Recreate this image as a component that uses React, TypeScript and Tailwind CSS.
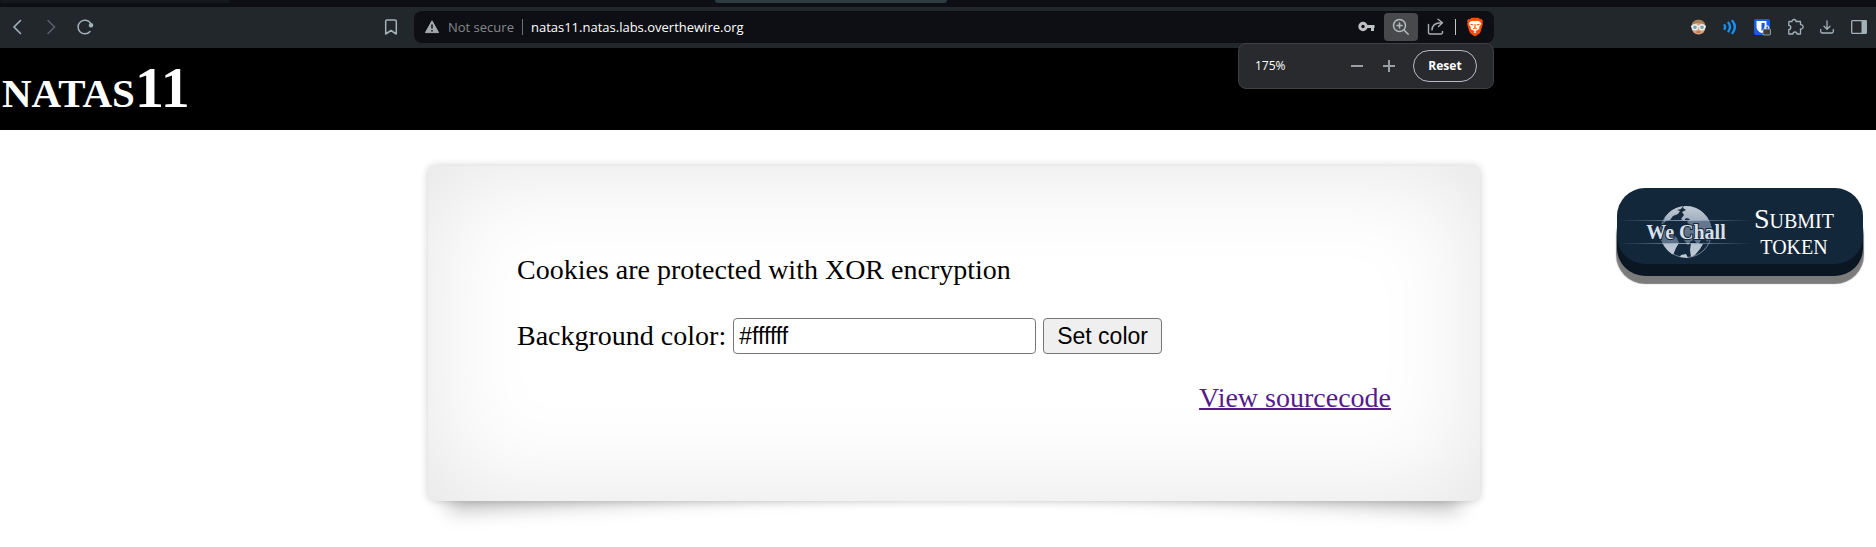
import React, { useState } from "react";

const ink = "#a3b2b8";

function Toolbar() {
  return (
    <header className="bg-[#22272b] font-['Open_Sans','Noto_Sans',sans-serif]">
      <div className="flex h-[7px] items-start justify-between bg-[#0e0f14]">
        <div className="h-[3px] w-[230px] rounded-b-md bg-[#15181c]" />
        <div className="mr-[929px] h-[3px] w-[232px] rounded-b-md bg-[#2f3b40]" />
      </div>
      <div className="flex h-[41px] items-center px-2 pb-px">
        <div className="flex min-w-0 flex-1 items-center justify-between pr-4">
          <nav className="flex flex-none items-center">
            <button aria-label="Back" className="flex w-[34px] justify-start pl-1">
              <svg width="10" height="16" viewBox="0 0 10 16" fill="none" stroke={ink} strokeWidth="1.6" strokeLinecap="round">
                <path d="M8.500 1.500 2 8l6.500 6.500" />
              </svg>
            </button>
            <button aria-label="Forward" className="flex w-[34px] justify-start pl-1">
              <svg width="10" height="16" viewBox="0 0 10 16" fill="none" stroke="#566066" strokeWidth="1.6" strokeLinecap="round">
                <path d="M2 1.500 8.500 8 2 14.500" />
              </svg>
            </button>
            <button aria-label="Reload" className="flex">
              <svg width="18" height="18" viewBox="0 0 18 18" fill="none" stroke={ink} strokeWidth="1.500" strokeLinecap="round">
                <path d="M14.500 5.200A6.800 6.800 0 1 0 14 13.500" />
                <circle cx="15" cy="7.300" r="1.500" fill={ink} />
              </svg>
            </button>
          </nav>
          <button aria-label="Bookmark this page" className="flex">
            <svg width="14" height="18" viewBox="0 0 14 18" fill="none" stroke={ink} strokeWidth="1.500" strokeLinejoin="round">
              <path d="M3 2h8a1.300 1.300 0 0 1 1.300 1.300V16L7 12.500 1.700 16V3.300A1.300 1.300 0 0 1 3 2Z" />
            </svg>
          </button>
        </div>
        <div className="relative flex h-8 w-[1080px] items-center rounded-lg bg-[#0e0f14] pr-[10px] pl-[11px]">
          <svg width="14" height="14" viewBox="0 0 14 14">
            <path d="M7 .8 13.600 12.600H.4Z" fill="#a5a8ab" stroke="#a5a8ab" strokeLinejoin="round" />
            <path d="M7 4.500v4M7 10v1.400" stroke="#0e0f14" strokeWidth="1.500" />
          </svg>
          <span className="ml-[9px] text-[13px] text-[#84898d]">Not secure</span>
          <span className="mx-2 h-4 w-px bg-[#6b7075]" />
          <input
            aria-label="Address"
            defaultValue="natas11.natas.labs.overthewire.org"
            className="min-w-0 flex-1 bg-transparent text-[13px] text-white outline-none"
          />
          <button aria-label="Passwords" className="flex">
            <svg width="18" height="12" viewBox="0 0 18 12" fill="none" stroke="#c0c0c2">
              <circle cx="5" cy="5.500" r="3.200" strokeWidth="3" />
              <path d="M8 5.500h8.500M14.500 6v4" strokeWidth="3" />
            </svg>
          </button>
          <button aria-label="Zoom" className="ml-2 flex h-7 w-[34px] items-center justify-center rounded bg-[#48494c]">
            <svg width="18" height="18" viewBox="0 0 18 18" fill="none" stroke="#b5babd" strokeWidth="1.500" strokeLinecap="round">
              <circle cx="7.500" cy="7.500" r="6" />
              <path d="m12 12 4.200 4.200M7.500 5v5M5 7.500h5" />
            </svg>
          </button>
          <button aria-label="Share" className="ml-[9px] flex">
            <svg width="18" height="18" viewBox="0 0 18 18" fill="none" stroke="#a9aeb1" strokeWidth="1.400" strokeLinecap="round" strokeLinejoin="round">
              <path d="M1.500 6.500v8a1.500 1.500 0 0 0 1.500 1.500h11a1.500 1.500 0 0 0 1.500-1.500v-1" />
              <path d="M5 12c0-4.500 2.500-7 9.500-7.200M11 1.200 15.500 4.800 11.500 8.600" />
            </svg>
          </button>
          <span className="mx-[10px] h-4 w-px bg-[#c3c5c8]" />
          <button aria-label="Shields" className="flex">
            <svg width="18" height="20" viewBox="0 0 18 20">
              <path d="M5.300.8h7.400l1.300 1.500 1.600-.2 1.400 2-.6 1.500.5 1.500-2.300 7.600c-.3 1-1 1.600-1.800 2.200L9 19.400l-3.800-2.500c-.8-.6-1.500-1.200-1.800-2.200L1.100 7.100l.5-1.500L1 4.100l1.400-2L4 2.300Z" fill="#fb4e0b" />
              <path d="m9 4.200 2-.5 2.800.8 1.500 2.200-2.200 3.600.3 1.700-2.500 1.200L9 14.700l-1.900-1.500-2.500-1.200.3-1.700-2.200-3.600 1.500-2.200L7 3.700Z" fill="#fff" />
              <path d="M4.500 7.300 7.300 8M13.500 7.300 10.700 8M9 7v3.500M7.300 11.700 9 10.800l1.700.9" stroke="#fb4e0b" strokeWidth="1.100" fill="none" />
              <path d="m7.600 15 1.400-.8 1.400.8L9 16.200Z" fill="#fff" />
            </svg>
          </button>
          <ZoomPopup />
        </div>
        <div className="flex w-[374px] flex-none items-center justify-end gap-[15px]">
          <button aria-label="Profile extension" className="flex">
            <svg width="17" height="16" viewBox="0 0 17 16">
              <circle cx="8.500" cy="8.500" r="7" fill="#dca07c" />
              <path d="M1.500 7C2 2.500 5 .8 8.500.8S15 2.500 15.500 7L12 4.500 6 4Z" fill="#a88257" />
              <path d="M1 7.500h15" stroke="#e9edef" strokeWidth="1.500" />
              <circle cx="5" cy="8.300" r="2.500" fill="#6fa0ab" stroke="#e9edef" strokeWidth="1.400" />
              <circle cx="12" cy="8.300" r="2.500" fill="#6fa0ab" stroke="#e9edef" strokeWidth="1.400" />
              <path d="M6.500 13h4" stroke="#a65645" />
            </svg>
          </button>
          <button aria-label="Sound extension" className="flex">
            <svg width="16" height="16" viewBox="0 0 16 16" fill="none" stroke="#1590f5" strokeWidth="2.400" strokeLinecap="round">
              <path d="M2.500 6.200q1.200 1.800 0 3.600M6.500 3.800q3 4.200 0 8.400M10.500 2q4.800 6 0 12" />
            </svg>
          </button>
          <button aria-label="Password vault" className="flex">
            <svg width="18" height="18" viewBox="0 0 18 18">
              <rect x="1" y="1" width="16" height="16" rx="2" fill="#175ddc" />
              <path d="M3.500 3h10v6c0 3-2 4.600-5 6-3-1.400-5-3-5-6Z" fill="#fff" />
              <path d="M8.500 5h3.200v4c0 1.800-1.200 2.900-3.200 4Z" fill="#175ddc" />
              <rect x="10" y="11" width="7.500" height="6" rx="1" fill="#3b3c3e" stroke="#ddd" strokeWidth=".6" />
              <path d="M11.800 11V9.800a2 2 0 0 1 4 0V11" fill="none" stroke="#ddd" strokeWidth="1.200" />
            </svg>
          </button>
          <button aria-label="Extensions" className="flex">
            <svg width="18" height="18" viewBox="0 0 18 18" fill="none" stroke={ink} strokeWidth="1.300" strokeLinejoin="round">
              <path d="M3.500 3.500H6a2 2 0 1 1 4 0h4.500v3.200a2.200 2.200 0 1 1 0 4.300v5H11a2 2 0 0 0-4 0H2.800v-4.500a2 2 0 0 0 0-4V4.200a.7.700 0 0 1 .7-.7Z" />
            </svg>
          </button>
          <button aria-label="Downloads" className="flex">
            <svg width="16" height="16" viewBox="0 0 16 16" fill="none" stroke={ink} strokeWidth="1.300" strokeLinecap="round" strokeLinejoin="round">
              <path d="M8 2v8M5 7.300 8 10.300l3-3M1.700 10.500v2a1.500 1.500 0 0 0 1.500 1.500h9.600a1.500 1.500 0 0 0 1.500-1.500v-2" />
            </svg>
          </button>
          <button aria-label="Sidebar" className="flex">
            <svg width="18" height="16" viewBox="0 0 18 16">
              <rect x="1.700" y="1.700" width="14.600" height="12.600" rx=".8" fill="none" stroke={ink} strokeWidth="1.300" />
              <path d="M11.500 1.500h5v13h-5Z" fill={ink} />
            </svg>
          </button>
        </div>
      </div>
    </header>
  );
}

function ZoomPopup() {
  return (
    <div className="absolute top-8 right-0 z-10 flex h-[46px] w-64 items-center rounded-lg border border-[#3f4043] bg-[#292a2e] px-4 text-white">
      <output className="flex-1 text-xs">175%</output>
      <button aria-label="Zoom out" className="flex w-8 justify-center">
        <span className="h-[2px] w-3 bg-[#9b9ea3]" />
      </button>
      <button aria-label="Zoom in" className="flex w-8 justify-center">
        <svg width="12" height="12" viewBox="0 0 12 12">
          <path d="M6 0v12M0 6h12" stroke="#9b9ea3" strokeWidth="2" />
        </svg>
      </button>
      <button className="ml-2 h-8 w-16 rounded-full border border-[#b9bac4] text-xs font-bold">Reset</button>
    </div>
  );
}

function WeChallLogo() {
  return (
    <svg width="136" height="54" viewBox="0 0 136 54" aria-label="We Chall" role="img">
      <defs>
        <linearGradient id="beam">
          <stop offset="0" stopColor="#6f8ba8" stopOpacity="0" />
          <stop offset=".5" stopColor="#9fb8d0" />
          <stop offset="1" stopColor="#6f8ba8" stopOpacity="0" />
        </linearGradient>
        <linearGradient id="land" gradientUnits="userSpaceOnUse" x1="0" y1="0" x2="0" y2="54">
          <stop offset="0" stopColor="#c3ccd7" />
          <stop offset=".28" stopColor="#a3b0c0" />
          <stop offset=".3" stopColor="#66798f" />
          <stop offset=".7" stopColor="#5d7087" />
          <stop offset=".72" stopColor="#b5c1ce" />
          <stop offset="1" stopColor="#c3ccd7" />
        </linearGradient>
        <clipPath id="disc">
          <circle cx="69" cy="27" r="26" />
        </clipPath>
      </defs>
      <circle cx="69" cy="27" r="25.500" fill="#14293e" stroke="#8b9aac" strokeWidth=".8" />
      <g clipPath="url(#disc)" fill="url(#land)">
        <path d="m48 12 6-7 7-3 5-1-2 3-4 1 3 1-2 3-5 2-3 4-4 1-3 3Z" />
        <path d="m67 1 8-1 9 5 7 8 4 10-1 9-4 5-2-5-4 3-3 5-4-5-3 1-3 4-4-5-2-7 3-6 5-2-3-3 3-3-4-1-2 3-3-2 3-4-2-3 4-2-3-2Z" />
        <path d="m43 22 5 3 7 4 5 4 2 5-3 5-3 7-5-2-6-9-3-9Z" />
        <path d="m74 38 12 1-3 5-5 6-4 2-1-7ZM64 50l5-1 2 4-8-1Z" />
      </g>
      <rect y="15" width="136" height="1" fill="url(#beam)" opacity=".8" />
      <rect y="38" width="136" height="1" fill="url(#beam)" opacity=".8" />
      <text x="69" y="34" textAnchor="middle" className="font-['Liberation_Serif',serif] text-[20px] font-bold" fill="#d8dfe7" stroke="#15283c" strokeWidth="2" paintOrder="stroke">
        We Chall
      </text>
    </svg>
  );
}

export default function App() {
  const [color, setColor] = useState("#ffffff");

  return (
    <div className="flex min-h-screen flex-col bg-white font-['Liberation_Serif',serif] text-[28px] leading-8 text-black">
      <Toolbar />
      <h1 className="bg-black px-[2px] pt-2 pb-[10px] text-[58px] leading-[64px] font-bold text-white [font-variant-caps:small-caps]">
        natas11
      </h1>
      <main className="grid grid-cols-[1fr_minmax(0,1052px)_1fr] items-start pl-8">
        <section className="relative isolate col-start-2 mt-9">
          <div className="absolute bottom-[26px] left-[18px] -z-10 h-[60px] w-1/2 -rotate-3 shadow-[0_22px_20px_rgba(0,0,0,0.26)]" />
          <div className="absolute right-[18px] bottom-[26px] -z-10 h-[60px] w-1/2 rotate-3 shadow-[0_22px_20px_rgba(0,0,0,0.26)]" />
          <div className="rounded-[7px] bg-white px-[89px] pt-[88px] pb-[87px] shadow-[0_0_8px_rgba(0,0,0,0.2),inset_0_0_106px_rgba(0,0,0,0.11)]">
            <p>Cookies are protected with XOR encryption</p>
            <form className="mt-8 flex items-center gap-[7px]" onSubmit={(e) => e.preventDefault()}>
              <label htmlFor="bgcolor">Background color:</label>
              <input
                id="bgcolor"
                value={color}
                onChange={(e) => setColor(e.target.value)}
                className="h-9 w-[303px] rounded-[4px] border border-[#767676] bg-white px-[5px] font-['Liberation_Sans',sans-serif] text-[23px]"
              />
              <button className="h-9 rounded-[4px] border border-[#767676] bg-[#efefef] px-[13px] font-['Liberation_Sans',sans-serif] text-[23px] leading-8">
                Set color
              </button>
            </form>
            <p className="mt-7 text-right">
              <a href="#source" className="text-[#551a8b] underline decoration-2">
                View sourcecode
              </a>
            </p>
          </div>
        </section>
        <a
          href="#token"
          className="mt-[58px] mr-[13px] flex h-[76px] w-[246px] items-center justify-self-end rounded-[28px] bg-[#13273b] pt-3 text-white shadow-[0_12px_0_#0a1622,0_19px_1px_1px_#7b7b7b]"
        >
          <WeChallLogo />
          <span className="-ml-3 flex-1 pr-4 text-center leading-[26px] [font-variant-caps:small-caps]">Submit token</span>
        </a>
      </main>
    </div>
  );
}
